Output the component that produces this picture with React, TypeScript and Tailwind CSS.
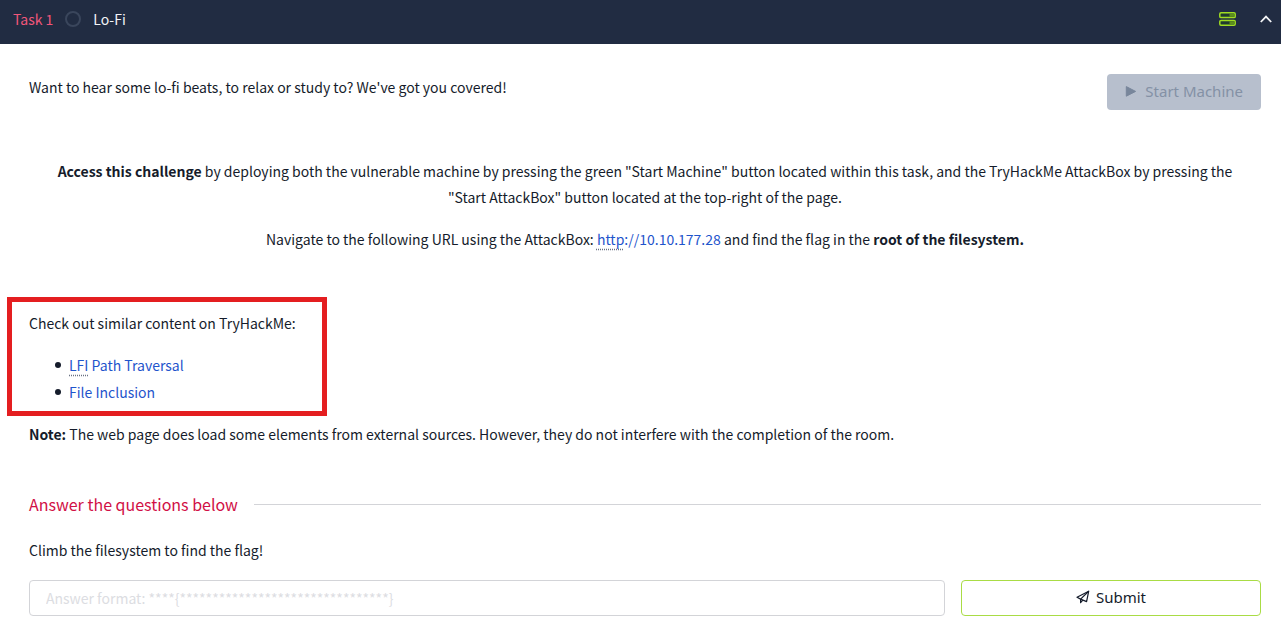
import React from "react";

const ANSWER_FORMAT = "Answer format: ****{********************************}";

function ServerIcon() {
  return (
    <svg width="17" height="14" viewBox="0 0 17 14" fill="none" aria-hidden="true">
      <rect x="0.8" y="0.8" width="15.4" height="4.8" rx="1.2" fill="#1f3a2e" stroke="#9fdc22" strokeWidth="1.5" />
      <rect x="0.8" y="8.4" width="15.4" height="4.8" rx="1.2" fill="#1f3a2e" stroke="#9fdc22" strokeWidth="1.5" />
      <path d="M10.5 3.2h5M10.5 10.8h5" stroke="#5d8f1c" strokeWidth="3" />
    </svg>
  );
}

function ChevronUpIcon() {
  return (
    <svg width="12" height="8" viewBox="0 0 12 8" fill="none" aria-hidden="true">
      <path d="M0.8 7L6 1.6 11.2 7" stroke="#f3f4f6" strokeWidth="1.8" />
    </svg>
  );
}

function PlaneIcon() {
  return (
    <svg width="14" height="14" viewBox="0 0 14 14" fill="none" stroke="#151c2b" strokeWidth="1.2" strokeLinejoin="round" aria-hidden="true">
      <path d="M12.7 1.2L1 7.2l3.6 1.9 6 2.5z" />
      <path d="M12.7 1.2L4.6 9.1v3.6l2.2-2.6" />
    </svg>
  );
}

function TaskHeader() {
  return (
    <header className="flex h-11 items-center justify-between bg-[#212c42] pr-[9px] pb-1.5 pl-[13px]">
      <div className="flex items-center gap-3 text-sm leading-6">
        <span className="text-[#f0567a]">Task 1</span>
        <span className="size-4 rounded-full border-2 border-[#3a465c]" />
        <h1 className="text-gray-100">Lo-Fi</h1>
      </div>
      <div className="flex items-center gap-6">
        <ServerIcon />
        <button type="button" aria-label="Collapse task">
          <ChevronUpIcon />
        </button>
      </div>
    </header>
  );
}

export default function App() {
  return (
    <div className="min-h-screen bg-white font-['Noto_Sans_CJK_SC',sans-serif] text-sm leading-[26px] text-[#151c2b]">
      <TaskHeader />
      <main className="pt-[30px] pr-5 pb-6 pl-[29px]">
        <div className="flex items-start justify-between">
          <p>Want to hear some lo-fi beats, to relax or study to? We've got you covered!</p>
          <button
            type="button"
            disabled
            className="flex h-9 items-center gap-2 rounded bg-[#b7bfcd] px-[18px] pb-0.5 font-['Noto_Sans',sans-serif] text-[15px] text-[#8491a5]"
          >
            <svg width="12" height="12" viewBox="0 0 12 12" aria-hidden="true">
              <path d="M1.3 1.6v9.6L10.6 6.4z" fill="#78869b" stroke="#78869b" strokeLinejoin="round" />
            </svg>
            Start Machine
          </button>
        </div>

        <div className="mt-12 flex flex-col gap-4 px-3 text-center">
          <p>
            <strong>Access this challenge</strong> by deploying both the vulnerable machine by pressing the green "Start
            Machine" button located within this task, and the TryHackMe AttackBox by pressing the "Start&nbsp;AttackBox"
            button located at the top-right of the page.
          </p>
          <p>
            Navigate to the following URL using the AttackBox:{" "}
            <a href="http://10.10.177.28" className="text-[#1f55cc]">
              <span className="underline decoration-gray-500 decoration-dotted underline-offset-4">http</span>
              ://10.10.177.28
            </a>{" "}
            and find the flag in the <strong>root of the filesystem.</strong>
          </p>
        </div>

        <section className="relative mt-[58px] flex w-fit min-w-[273px] flex-col gap-4">
          <div className="pointer-events-none absolute -top-[13px] -right-[25px] -bottom-[11px] -left-[22px] border-5 border-[#e41e20]" />
          <p>Check out similar content on TryHackMe:</p>
          <ul className="flex flex-col gap-px pl-[26px]">
            <li className="flex items-center gap-2 before:size-1.5 before:rounded-full before:bg-[#151c2b]">
              <a href="#lfi-path-traversal" className="text-[#1f55cc]">
                <span className="underline decoration-gray-500 decoration-dotted underline-offset-4">LFI</span> Path
                Traversal
              </a>
            </li>
            <li className="flex items-center gap-2 before:size-1.5 before:rounded-full before:bg-[#151c2b]">
              <a href="#file-inclusion" className="text-[#1f55cc]">
                File Inclusion
              </a>
            </li>
          </ul>
        </section>

        <p className="mt-4">
          <strong>Note:</strong> The web page does load some elements from external sources. However, they do not
          interfere with the completion of the room.
        </p>

        <div className="mt-11 flex items-center gap-4">
          <h2 className="text-base leading-[26px] text-[#d11046]">Answer the questions below</h2>
          <div className="h-px flex-1 bg-[#d3d4d8]" />
        </div>

        <form className="mt-5" onSubmit={(event) => event.preventDefault()}>
          <label htmlFor="answer">Climb the filesystem to find the flag!</label>
          <div className="mt-[17px] flex gap-4">
            <input
              id="answer"
              type="text"
              placeholder={ANSWER_FORMAT}
              className="h-9 min-w-0 flex-1 rounded border border-[#d3d4d8] px-4 placeholder:text-[#dcdde2]"
            />
            <button
              type="submit"
              className="flex h-9 w-[300px] items-center justify-center gap-1.5 rounded border border-[#a9dc45] pb-0.5 font-['Noto_Sans',sans-serif] text-[15px]"
            >
              <PlaneIcon />
              Submit
            </button>
          </div>
        </form>
      </main>
    </div>
  );
}
